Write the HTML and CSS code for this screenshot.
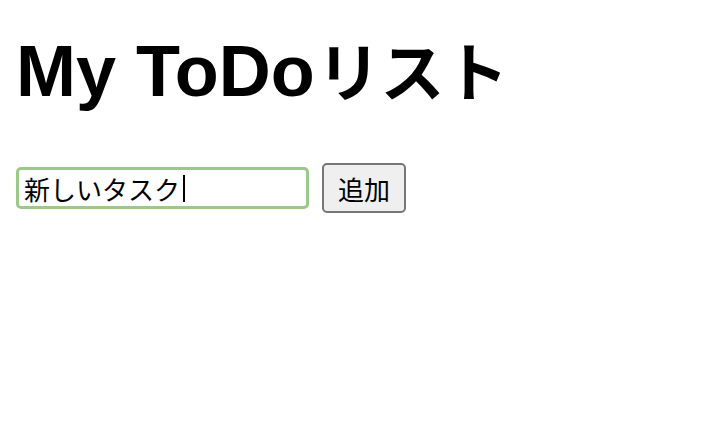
FILE: index.html
```html
<!DOCTYPE html>
<html lang="ja">
<head>
<meta charset="utf-8">
<title>My ToDoリスト</title>
<link rel="stylesheet" href="styles.css">
</head>
<body>
<main class="app">
  <h1 class="title">My ToDo<span class="title-jp">リスト</span></h1>
  <form class="add-form" onsubmit="return false;">
    <div class="input-wrap">
      <input class="task-input" type="text" value="新しいタスク">
      <span class="caret"></span>
    </div>
    <button class="add-button" type="submit">追加</button>
  </form>
</main>
</body>
</html>
```
FILE: styles.css
```css
html, body {
  margin: 0;
  padding: 0;
  background: #ffffff;
}

.app {
  padding: 31px 16px 16px 16px;
}

.title {
  margin: 0;
  font-family: "Liberation Sans", "Noto Sans CJK JP", sans-serif;
  font-weight: bold;
  font-size: 72px;
  line-height: 80px;
  color: #000000;
}

.title-jp {
  font-family: "Noto Sans CJK JP", sans-serif;
  font-size: 64px;
  line-height: 60px;
  margin-left: 2px;
}

.add-form {
  display: flex;
  align-items: center;
  gap: 13px;
  margin-top: 52px;
}

.input-wrap {
  position: relative;
  display: flex;
}

.task-input {
  box-sizing: border-box;
  width: 293px;
  height: 42px;
  margin: 0;
  padding: 0 5px;
  border: 3px solid #9cc98b;
  border-radius: 5px;
  outline: none;
  background: #ffffff;
  color: #000000;
  caret-color: transparent;
  font-family: "Noto Sans CJK JP", sans-serif;
  font-size: 26px;
}

.caret {
  position: absolute;
  left: 167px;
  top: 8px;
  width: 2px;
  height: 27px;
  background: #000000;
}

.add-button {
  box-sizing: border-box;
  width: 84px;
  height: 50px;
  margin: 0;
  padding: 0;
  border: 2px solid #767676;
  border-radius: 5px;
  background: #efefef;
  color: #000000;
  font-family: "Noto Sans CJK JP", sans-serif;
  font-size: 26px;
}
```
